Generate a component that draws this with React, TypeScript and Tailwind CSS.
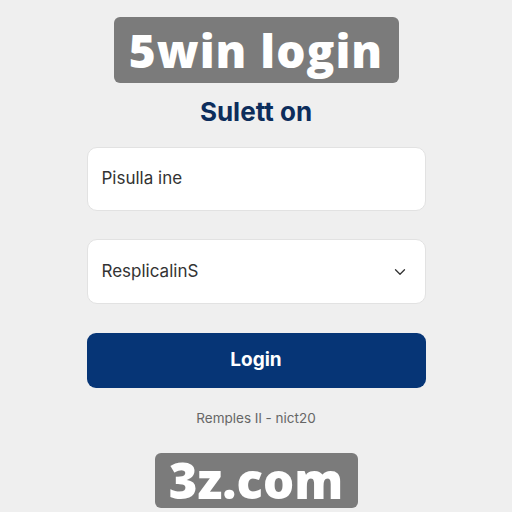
import React from "react";
import { ChevronDown } from "lucide-react";

const App: React.FC = () => {
	return (
		<div className="w-[512px] h-[512px] bg-[#efefef] flex flex-col items-center overflow-hidden font-['Inter',sans-serif]">
			<div className="mt-[17px] h-[66px] w-[285px] rounded-[6px] bg-[#7b7b7b] flex items-center justify-center">
				<span className="text-white text-[46px] font-extrabold tracking-[1px] leading-none font-['Open_Sans',sans-serif]">
					5win login
				</span>
			</div>

			<h1 className="mt-[14px] h-[30px] text-[26px] font-bold text-[#0c2d5c] leading-[30px]">Sulett on</h1>

			<div className="mt-[20px] w-[339px] flex flex-col">
				<div className="h-[64px] rounded-[10px] bg-white border border-[#e2e2e2] flex items-center px-[14px]">
					<span className="text-[17px] text-[#333333]">Pisulla ine</span>
				</div>

				<div className="mt-[28px] h-[65px] rounded-[10px] bg-white border border-[#e2e2e2] flex items-center justify-between pl-[14px] pr-[16px]">
					<span className="text-[17px] text-[#333333]">ResplicalinS</span>
					<ChevronDown className="w-[18px] h-[18px] text-[#333333]" strokeWidth={1.75} />
				</div>

				<button className="mt-[29px] h-[55px] rounded-[9px] bg-[#063576] text-white text-[19px] font-bold flex items-center justify-center">
					Login
				</button>
			</div>

			<p className="mt-[20px] text-[13.5px] leading-[20px] text-[#666666]">Remples Il - nict20</p>

			<div className="mt-[25px] h-[55px] w-[203px] rounded-[6px] bg-[#7b7b7b] flex items-center justify-center">
				<span className="text-white text-[49px] font-extrabold leading-none font-['Open_Sans',sans-serif]">3z.com</span>
			</div>
		</div>
	);
};

export default App;
